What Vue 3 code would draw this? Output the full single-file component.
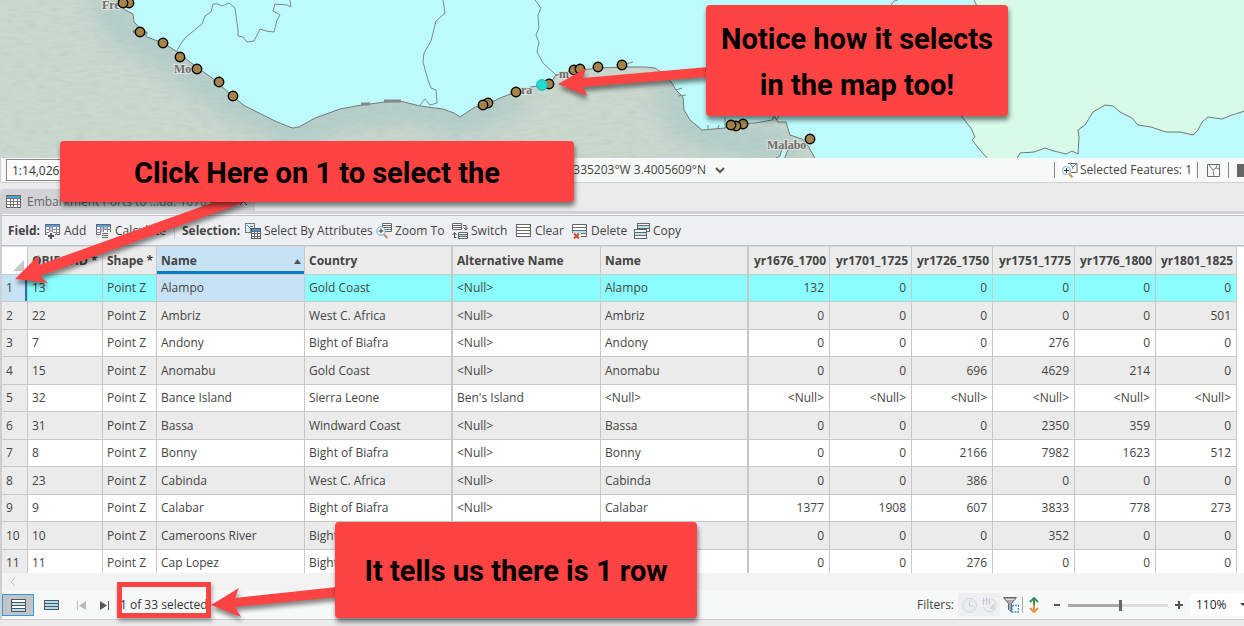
<script setup>
import { ref } from 'vue'

const scale = ref('1:14,026,753')
const zoom = ref('110%')
const sliderValue = ref(53)

const textColumns = ['OBJECTID *', 'Shape *', 'Name', 'Country', 'Alternative Name', 'Name']
const yearColumns = ['yr1676_1700', 'yr1701_1725', 'yr1726_1750', 'yr1751_1775', 'yr1776_1800', 'yr1801_1825']

const N = '<Null>'
const rows = [
  [13, 'Alampo', 'Gold Coast', N, 'Alampo', 132, 0, 0, 0, 0, 0],
  [22, 'Ambriz', 'West C. Africa', N, 'Ambriz', 0, 0, 0, 0, 0, 501],
  [7, 'Andony', 'Bight of Biafra', N, 'Andony', 0, 0, 0, 276, 0, 0],
  [15, 'Anomabu', 'Gold Coast', N, 'Anomabu', 0, 0, 696, 4629, 214, 0],
  [32, 'Bance Island', 'Sierra Leone', "Ben's Island", N, N, N, N, N, N, N],
  [31, 'Bassa', 'Windward Coast', N, 'Bassa', 0, 0, 0, 2350, 359, 0],
  [8, 'Bonny', 'Bight of Biafra', N, 'Bonny', 0, 0, 2166, 7982, 1623, 512],
  [23, 'Cabinda', 'West C. Africa', N, 'Cabinda', 0, 0, 386, 0, 0, 0],
  [9, 'Calabar', 'Bight of Biafra', N, 'Calabar', 1377, 1908, 607, 3833, 778, 273],
  [10, 'Cameroons River', 'Bight', '', '', 0, 0, 0, 352, 0, 0],
  [11, 'Cap Lopez', 'Bight', '', '', 0, 0, 276, 0, 0, 0],
].map(([id, ...rest]) => [id, 'Point Z', ...rest])

const ports = [
  [129, 3], [123, 3], [140, 32], [163, 43], [180, 57], [197, 69], [219, 82], [233, 96],
  [488, 103], [483, 105], [516, 92], [549, 84], [574, 70], [580, 69], [598, 67], [622, 65],
  [743, 124], [736, 126], [731, 125], [810, 139],
]
</script>

<template>
  <div class="app">
    <section class="map" aria-label="Map">
      <svg viewBox="1 0 1243 158" preserveAspectRatio="xMinYMin slice">
        <defs>
          <filter id="water" x="0" y="0" width="100%" height="100%">
            <feTurbulence type="fractalNoise" baseFrequency="0.08 0.35" numOctaves="3" seed="4" />
            <feColorMatrix values="0 0 0 0 0.35  0 0 0 0 0.45  0 0 0 0 0.42  0.8 0 0 0 -0.3" />
          </filter>
          <filter id="soft"><feGaussianBlur stdDeviation="12" /></filter>
        </defs>
        <rect width="1244" height="158" fill="#cbd8ce" />
        <g filter="url(#soft)" fill="none" stroke="#b2cdc9" stroke-width="34">
          <path d="M105 -10L120 25L170 55L230 100L290 130L350 112L410 106L460 120L520 94" />
          <path d="M665 80L690 128L740 140L800 150" />
        </g>
        <rect width="1244" height="158" filter="url(#water)" opacity=".5" />
        <path class="land" d="M119 -2L125 10L133 14L134 22L140 28L147 37L163 43L176 51L190 62L205 73L215 80L233 97L245 106L275 121L287 126L293 128L299 127L315 118L340 109L362 105L385 102L400 101L420 106L443 109L454 113L460 117L475 107L486 105L500 98L516 92L530 87L549 85L556 75L570 71L600 68L625 67L645 67L655 68L665 75L672 83L676 90L683 97L684 110L690 120L702 130L725 128L733 124L755 123L772 120L775 117L778 122L786 122L790 135L802 139L808 146L816 160L1248 160V-2Z" />
        <path class="green" d="M973 -2L978 8L962 117L971 128L975 137L972 140L980 150L989 160H1016L1020 153L1034 152L1045 148L1054 151L1066 154L1072 151L1078 154L1079 137L1078 130L1085 125L1093 112L1105 105L1113 106L1120 112L1132 118L1138 125L1151 127L1166 132L1180 132L1193 135L1198 130L1202 122L1208 117L1222 119L1232 115L1248 110V-2Z" />
        <path class="land" d="M773 160L780 156L782 149L789 147L784 160Z" />
        <g class="border">
          <path d="M177 51L180 45L186 37L202 24L205 16L211 12L213 4L218 4L222 6L229 3L235 8L238 30L238 36L243 37L247 42L254 41L260 29L266 31L274 32L277 20L280 15L273 11L275 4L287 5L291 7L290 0" />
          <path d="M443 0L445 13L436 21L431 41L424 53L423 62L428 80L431 88L436 90L437 103L430 105L425 99L420 105" />
          <path d="M535 0L541 8L538 15L539 28L536 35L539 42L537 52L543 63L557 76" />
          <path d="M891 5L894 1L898 0M676 90l6 -2M678 96l8 -1M725 128v-11M625 64l8 -2M708 129v-4M718 128l1 -3M772 120l2 -5l3 5l2 -5" />
        </g>
        <g class="lagoon">
          <path d="M361 104h9M384 101h17M133 32l7 -3M142 30l5 4" />
        </g>
        <g class="places">
          <text x="102" y="9">Fre</text>
          <text x="174" y="73">Mo</text>
          <text x="521" y="94">ra</text>
          <text x="559" y="78">m</text>
          <text x="767" y="149">Malabo</text>
        </g>
        <circle v-for="([x, y], i) in ports" :key="i" class="port" :cx="x" :cy="y" r="4.7" />
        <circle cx="542" cy="85" r="5.4" fill="#25dcd3" stroke="#10b8b8" />
      </svg>
    </section>

    <footer class="map-status">
      <input v-model="scale" class="scale" aria-label="Map scale" />
      <span class="coords">.1335203°W 3.4005609°N</span>
      <button class="plain caret" aria-label="Coordinate format">
        <svg width="12" height="8"><path d="M2 2l4 4l4 -4" fill="none" stroke="#555" stroke-width="2" /></svg>
      </button>
      <div class="status-right">
        <button class="plain features">
          <svg width="17" height="17" viewBox="0 0 17 17" fill="none">
            <path d="M7 1.500h9v9h-6" stroke="#666" /><path d="M8 1l3 3l1 3M15 2l-3 3" stroke="#3d8cc4" />
            <circle cx="5.500" cy="8.500" r="4" fill="#fff" stroke="#6fb2de" /><path d="M3 8.500h5M5.500 6v5" stroke="#333" />
            <path d="M8.500 12l3 3.500" stroke="#c98f4e" stroke-width="2" />
          </svg>
          Selected Features: 1
        </button>
        <button class="plain selector" aria-label="Map selection">
          <svg width="13" height="13" viewBox="0 0 13 13" fill="none" stroke="#6a6a6a"><path d="M.5 .5h12v12h-12z" /><path d="M2 1l4 5l1 6M6 6l3 -2l1 -3M9 4l3 1" stroke="#888" /></svg>
        </button>
        <button class="plain pause" aria-label="Pause drawing"><i></i></button>
      </div>
    </footer>

    <nav class="tabs">
      <div class="tab">
        <svg width="15" height="13" viewBox="0 0 15 13" shape-rendering="crispEdges"><path fill="#fff" stroke="#666" d="M.5 .5h14v12h-14z" /><path fill="#4aa3d4" d="M1 1h13v2H1z" /><path stroke="#777" d="M0 3.500h15M0 6.500h15M0 9.500h15M4.500 3v10M7.500 3v10M11.500 3v10" /></svg>
        <span>Embarkment Ports to ...da: 1676 - 1</span>
        <button class="plain close" aria-label="Close tab"><svg width="9" height="9"><path d="M1 1l7 7M8 1l-7 7" stroke="#555" /></svg></button>
      </div>
    </nav>

    <div class="pane">
      <div class="toolbar" role="toolbar" aria-label="Table tools">
        <b>Field:</b>
        <button class="plain">
          <svg width="16" height="16" viewBox="0 0 16 16" shape-rendering="crispEdges"><path fill="#fff" stroke="#666" d="M.5 1.500h14v10h-14z" /><path fill="#666" d="M0 1h15v3H0z" /><path fill="#5aa0dc" d="M1 2h13v2H1z" /><path stroke="#888" d="M0 6.500h15M0 9.500h15M4.500 4v8M7.500 4v8M11.500 4v8" /><path fill="#c4bfe0" d="M5 4h2v5H5z" /><path fill="#eeeff2" d="M2 11h8v5H2zM4 9h4v3H4z" /><path fill="#555" d="M5 10h2v6H5zM3 12h6v2H3z" /></svg>
          Add
        </button>
        <button class="plain">
          <svg width="16" height="16" viewBox="0 0 16 16" shape-rendering="crispEdges"><path fill="#fff" stroke="#666" d="M.5 1.500h14v10h-14z" /><path fill="#666" d="M0 1h15v3H0z" /><path fill="#5aa0dc" d="M1 2h13v2H1z" /><path stroke="#888" d="M0 6.500h15M0 9.500h15M4.500 4v8M7.500 4v8M11.500 4v8" /><path fill="#c4bfe0" d="M5 4h2v5H5zM8 4h3v2H8z" /><path fill="#eeeff2" d="M5 9h10v7H5z" /><path fill="#666" d="M6 10h6v1H6zM6 12h6v1H6zM6 14h6v1H6z" /></svg>
          Calculate
        </button>
        <b class="selection">Selection:</b>
        <button class="plain">
          <svg width="16" height="16" viewBox="0 0 16 16" fill="none" shape-rendering="crispEdges"><path fill="#d8f2fb" stroke="#777" d="M.5 .5h9v9h-9z" /><path stroke="#777" d="M2 2l3 3l1 4M8 3h-3" /><path fill="#fff" stroke="#555" d="M6.500 5.500h9v10h-9z" /><path fill="#3f94d4" d="M7 6h8v2H7z" /><path stroke="#666" d="M6 8.500h10M6 10.500h10M6 13.500h10M9.500 8v8M12.500 8v8" /></svg>
          Select By Attributes
        </button>
        <button class="plain">
          <svg width="16" height="16" viewBox="0 0 16 16" fill="none"><path fill="#fff" stroke="#666" d="M6.500 .5h9v8h-9z" /><path stroke="#666" d="M6 2.500h10M6 4.500h10M6 6.500h10" /><circle cx="5" cy="8" r="4.200" fill="#fff" stroke="#5ca8dc" /><path stroke="#333" d="M2.500 8h5M5 5.500v5" /><path stroke="#c98f4e" stroke-width="2" d="M8 11.500l3.500 3.500" /></svg>
          Zoom To
        </button>
        <button class="plain">
          <svg width="16" height="16" viewBox="0 0 16 16" fill="none"><path stroke="#666" fill="#fff" d="M.5 .5h9v6h-9z" /><path stroke="#666" d="M0 2.500h10M0 4.500h10" /><path fill="#fff" stroke="#666" d="M6.500 9.500h9v6h-9z" /><path fill="#a8def0" d="M7 12h8v2H7z" /><path stroke="#666" d="M6 11.500h10M6 13.500h10" /><path stroke="#555" d="M11 2.500h3v4M11.500 4.500l2.500 2.500l2 -2.500M2.500 15v-5M.5 12l2 -2.500l2 2.500M2.500 14.500h2" /></svg>
          Switch
        </button>
        <button class="plain">
          <svg width="16" height="16" viewBox="0 0 16 16" shape-rendering="crispEdges"><path fill="#fff" stroke="#666" d="M.5 1.500h14v12h-14z" /><path stroke="#666" d="M0 4.500h15M0 7.500h15M0 10.500h15" /></svg>
          Clear
        </button>
        <button class="plain">
          <svg width="16" height="16" viewBox="0 0 16 16"><path fill="#fff" stroke="#666" d="M.5 1.500h14v12h-14z" /><path fill="#b4e4f4" d="M1 8h13v3H1z" /><path stroke="#666" d="M0 4.500h15M0 7.500h15M0 10.500h15" /><path fill="#eeeff2" d="M0 10h9v6H0z" /><path stroke="#c8512c" stroke-width="2" d="M2 10.500l5 5M7 10.500l-5 5" /></svg>
          Delete
        </button>
        <button class="plain">
          <svg width="16" height="16" viewBox="0 0 16 16" shape-rendering="crispEdges"><path fill="#fff" stroke="#666" d="M3.500 .5h12v8h-12z" /><path fill="#b4e4f4" d="M4 3h11v2H4z" /><path stroke="#666" d="M3 2.500h13M3 5.500h13" /><path fill="#fff" stroke="#666" d="M.5 6.500h12v9h-12z" /><path fill="#b4e4f4" d="M1 10h11v2H1z" /><path stroke="#666" d="M0 9.500h13M0 12.500h13" /></svg>
          Copy
        </button>
      </div>

      <div class="grid">
        <table>
          <colgroup>
            <col class="c-row" /><col class="c-id" /><col class="c-shape" />
            <col class="c-text" /><col class="c-text" /><col class="c-text" /><col class="c-text" />
            <col v-for="(y, i) in yearColumns" :key="y" :class="i === 1 || i === 3 ? 'c-year-wide' : 'c-year'" />
            <col />
          </colgroup>
          <thead>
            <tr>
              <td class="corner"><svg width="11" height="11"><path d="M11 0v11H0z" fill="#c8c8c8" /></svg></td>
              <th v-for="(c, i) in textColumns" :key="i" scope="col" :class="{ sorted: i === 2, thick: i === 3 || i === 5 }" :aria-sort="i === 2 ? 'ascending' : null">
                {{ c }}<svg v-if="i === 2" class="asc" width="7" height="5"><path d="M3.500 0l3.500 5H0z" fill="#555" /></svg>
              </th>
              <th v-for="y in yearColumns" :key="y" scope="col" class="num">{{ y }}</th>
              <td class="rest"></td>
            </tr>
          </thead>
          <tbody>
            <tr v-for="(row, r) in rows" :key="r" :class="{ selected: r === 0 }">
              <th scope="row">{{ r + 1 }}</th>
              <td v-for="(cell, i) in row" :key="i" :class="{ num: i > 5, thick: i === 3 || i === 5, key: i === 2 }">{{ cell }}</td>
              <td class="rest"></td>
            </tr>
          </tbody>
        </table>
      </div>

      <div class="hscroll">
        <svg width="6" height="8"><path d="M5 0l-4 4l4 4" fill="none" stroke="#c4c4c4" /></svg>
      </div>

      <div class="table-status">
        <button class="plain view active" aria-label="Show all records">
          <svg width="15" height="13" viewBox="0 0 15 13" shape-rendering="crispEdges"><path fill="#fff" stroke="#555" d="M.5 .5h14v12h-14z" /><path fill="#b4e4f4" d="M1 4h13v2H1zM1 10h13v2H1z" /><path stroke="#555" d="M0 3.500h15M0 6.500h15M0 9.500h15" /></svg>
        </button>
        <button class="plain view" aria-label="Show selected records">
          <svg width="15" height="11" viewBox="0 0 15 11" shape-rendering="crispEdges"><path fill="#a4dcf4" stroke="#555" d="M.5 .5h14v9h-14z" /><path stroke="#555" d="M0 3.500h15M0 6.500h15" /></svg>
        </button>
        <button class="plain step" aria-label="First record"><svg width="9" height="9"><path d="M0 0h1v9H0zM9 0v9L2 4.500z" fill="#b9b9b9" /></svg></button>
        <button class="plain step" aria-label="Next record"><svg width="9" height="9"><path d="M8 0h1v9H8zM0 0v9l7 -4.500z" fill="#555" /></svg></button>
        <span class="count">1 of 33 selected</span>

        <div class="filters">
          <span>Filters:</span>
          <div class="disabled-set">
            <button class="plain" disabled aria-label="Filter by time"><svg width="15" height="15" viewBox="0 0 15 15" fill="none" stroke="#cfd3d8"><circle cx="7.500" cy="7.500" r="7" /><circle cx="7.500" cy="7.500" r="5" stroke="#dce4e4" /><path d="M7.500 3.500v4.500h4" stroke="#b9cfe0" /></svg></button>
            <button class="plain" disabled aria-label="Filter by range"><svg width="15" height="15" viewBox="0 0 15 15" fill="none" stroke="#cfd3d8"><path d="M9 1a6.500 6.500 0 1 1 -7.500 8" /><path d="M1.500 0v7M4.500 0v7M7.500 0v7M0 3h3M3 2h3M6 4h3" stroke="#c2ccd4" /><path d="M8 10l4 -4v5z" fill="#cfe0d0" /></svg></button>
          </div>
          <button class="plain funnel" aria-label="Filter by extent"><svg width="16" height="16" viewBox="0 0 16 16" fill="none"><path d="M.5 .5h13l-5 6v8l-3 -2v-6z" fill="#a8a8a8" stroke="#666" /><path d="M3 2.500h8" stroke="#ddd" /><path d="M9 8.500h6.500v6.500H9z" fill="#fff" stroke="#2b8fd0" stroke-width="1.500" stroke-dasharray="2 1" /></svg></button>
          <button class="plain updown" aria-label="Auto refresh"><svg width="10" height="16" viewBox="0 0 10 16" fill="none" stroke-width="2"><path d="M1 5l4 -4l4 4M5 2v6" stroke="#3d8f5a" /><path d="M1 11l4 4l4 -4M5 8v6" stroke="#e8923c" /></svg></button>
          <button class="plain" aria-label="Zoom out"><svg width="8" height="8"><path d="M1 4h6" stroke="#555" stroke-width="2" /></svg></button>
          <input v-model="sliderValue" type="range" min="0" max="100" aria-label="Table zoom" />
          <button class="plain" aria-label="Zoom in"><svg width="8" height="8"><path d="M0 4h8M4 0v8" stroke="#555" stroke-width="2" /></svg></button>
          <select v-model="zoom" aria-label="Zoom level"><option>100%</option><option>110%</option><option>120%</option></select>
          <svg class="select-arrow" width="6" height="4"><path d="M0 0h6l-3 3z" fill="#444" /></svg>
        </div>
      </div>
    </div>

    <div class="annotations">
      <svg class="arrows" width="1244" height="626" viewBox="0 0 1244 626">
        <path d="M558 84L586 68L583 78L708 67V77L583 87L587 96Z" />
        <path d="M15 279L39 255V265L217 201L248 201L40 276L48 283Z" />
        <path d="M211 605L239 588L235 598L337 587V597L235 607L241 617Z" />
      </svg>
      <div class="frame"></div>
      <div class="callout one">Notice how it selects<br />in the map too!</div>
      <div class="callout two">Click Here on 1 to select the</div>
      <div class="callout three">It tells us there is 1 row</div>
    </div>
  </div>
</template>

<style>
body { margin: 0; background: #ebebeb; }
</style>

<style scoped>
.app {
  position: relative;
  display: flex;
  flex-direction: column;
  height: 100vh;
  overflow: hidden;
  box-sizing: border-box;
  padding-bottom: 6px;
  background: #ebebeb;
  color: #444;
  font: 12px/16px "Open Sans", "Noto Sans", sans-serif;
}
.app * { box-sizing: border-box; }
svg { display: block; flex: none; }
.plain {
  display: flex;
  align-items: center;
  padding: 0;
  border: 0;
  background: none;
  color: inherit;
  font: inherit;
  white-space: nowrap;
}

.map { flex: none; height: 158px; border-left: 1px solid #d0d0d8; }
.map svg { width: 100%; height: 100%; }
.land { fill: #bdfafb; stroke: #777; }
.green { fill: #d7fbe8; stroke: #777; }
.border { fill: none; stroke: #7d8b8c; }
.lagoon { fill: none; stroke: #808a8a; stroke-width: 3; }
.port { fill: #a68449; stroke: #000; stroke-width: 1.5; }
.places { font: bold 12px "Liberation Serif", serif; fill: #6e6a6a; stroke: #dbe3dc; stroke-width: 2; paint-order: stroke; }

.map-status {
  flex: none;
  display: flex;
  align-items: center;
  height: 25px;
  border: 1px solid #d0d0d4;
  border-width: 0 0 1px 1px;
  background: #f7f9f8;
  padding-left: 5px;
}
.scale { width: 120px; height: 22px; margin: 0; padding: 0 5px; border: 1px solid #888; background: #fff; color: #333; font: inherit; }
.coords { width: 145px; margin-left: 435px; text-align: right; white-space: nowrap; }
.caret { margin-left: 8px; }
.status-right { display: flex; align-items: center; margin-left: auto; }
.status-right::before { content: ""; width: 1px; height: 16px; margin-right: 3px; background: #888; }
.features { gap: 2px; height: 20px; padding: 0 3px; background: #fff; }
.selector, .pause { height: 16px; border-left: 1px solid #888; }
.selector { width: 31px; margin-left: 2px; padding-left: 9px; }
.pause { padding-left: 8px; }
.pause i { width: 7px; height: 13px; background: #666; }

.tabs { flex: none; display: flex; align-items: flex-end; height: 31px; border-bottom: 3px solid #d2d3d7; }
.tab { display: flex; align-items: center; width: 255px; height: 22px; padding: 3px 7px 0 6px; background: #d2d3d7; color: #666; border-radius: 3px 3px 0 0; }
.tab span { flex: 1; margin-left: 6px; white-space: nowrap; }

.pane { flex: 1; min-height: 0; display: flex; flex-direction: column; border-left: 2px solid #cfcfd2; border-bottom: 1px solid #ccc; background: #f7f9f8; }
.toolbar {
  flex: none;
  display: grid;
  grid-template-columns: 37px 51px 78px 71px 131px 76px 64px 56px 62px 56px;
  align-items: center;
  height: 31px;
  margin-top: 1px;
  padding-left: 6px;
  border: 1px solid #bfc0c2;
  border-left: 0;
  border-right: 0;
  background: #eeeff2;
}
.toolbar .plain { gap: 3px; }
.selection { padding-left: 7px; border-left: 1px solid #ccc; white-space: nowrap; }

.grid { flex: 1; min-height: 0; overflow: hidden; background: #fff; border-top: 1px solid #d8d8d8; }
table { width: 100%; border-collapse: separate; border-spacing: 0; table-layout: fixed; }
.c-row { width: 26px; }
.c-id { width: 75px; }
.c-shape { width: 54px; }
.c-text { width: 148px; }
.c-year { width: 81px; }
.c-year-wide { width: 82px; }
th, td { padding: 0 2px 0 4px; border: 0 solid #c8c8c8; border-width: 0 1px 1px 0; text-align: left; white-space: nowrap; overflow: hidden; }
thead tr { height: 28px; }
thead th { position: relative; background: #ebebeb; color: #444; }
th.num { padding: 0 3px; }
.num { text-align: right; }
.thick { border-right-width: 2px; }
thead .sorted { background: #c8e2f5; box-shadow: inset 0 -3px #0a7ac4; }
.asc { position: absolute; right: 3px; top: 12px; }
.corner { background: #fff; padding: 0 3px 3px 0; vertical-align: bottom; }
.corner svg { margin-left: auto; }
tbody tr { height: 27px; }
tbody tr:nth-child(even) { height: 28px; background: #ebebeb; }
tbody th { background: #ebebeb; font-weight: 400; }
tbody .selected { background: #8affff; }
.selected th { background: #c8e2f5; box-shadow: inset -2px 0 #0a7ac4; }
.selected .key { background: #c8e2f5; }
tbody .num { padding-right: 5px; }
td.rest { border: 0; background: #fff; padding: 0; }

.hscroll { flex: none; display: flex; align-items: center; height: 18px; padding-left: 8px; background: #f3f3f3; }
.table-status { flex: none; display: flex; align-items: center; height: 28px; }
.view { justify-content: center; width: 32px; height: 22px; margin-right: 1px; }
.view.active { border: 1px solid #2e9be0; background: #c3c4c8; }
.step { width: 23px; padding-left: 9px; }
.count { margin-left: 6px; color: #333; white-space: nowrap; }
.filters { position: relative; display: flex; align-items: center; margin-left: auto; }
.disabled-set { display: flex; align-items: center; gap: 5px; height: 24px; margin-left: 4px; padding: 0 3px 0 4px; background: #eeeff2; }
.funnel { width: 20px; height: 16px; margin-left: 3px; border-right: 1px solid #aaa; }
.updown { margin: 0 14px 0 6px; }
input[type="range"] { appearance: none; width: 100px; height: 16px; margin: 0 7px; background: linear-gradient(90deg, #a9a9a9 52%, #ddd 52%) center / 100% 3px no-repeat; }
input[type="range"]::-webkit-slider-thumb { appearance: none; width: 3px; height: 11px; background: #666; }
select { appearance: none; width: 54px; height: 22px; margin-left: 7px; padding: 0 6px; border: 0; border-radius: 0; background: #fff; color: #222; font: inherit; }
.select-arrow { position: absolute; right: -2px; top: 10px; }

.annotations { position: absolute; inset: 0; pointer-events: none; }
.arrows { position: absolute; left: 0; top: 0; fill: #fe4343; filter: drop-shadow(1px 4px 2px rgba(0, 0, 0, .45)); }
.callout {
  position: absolute;
  display: flex;
  align-items: center;
  justify-content: center;
  padding-top: 2px;
  border-radius: 4px;
  background: #fe4343;
  box-shadow: 1px 4px 5px rgba(0, 0, 0, .5);
  color: #000;
  font: bold 29px/46px Roboto, sans-serif;
  text-align: center;
  white-space: nowrap;
}
.one { left: 706px; top: 5px; width: 302px; height: 111px; }
.two { left: 60px; top: 141px; width: 514px; height: 61px; }
.three { left: 335px; top: 522px; width: 362px; height: 96px; }
.frame { position: absolute; left: 117px; top: 582px; width: 94px; height: 36px; border: 5px solid #fe4343; box-shadow: 1px 3px 4px rgba(0, 0, 0, .35); }
</style>
